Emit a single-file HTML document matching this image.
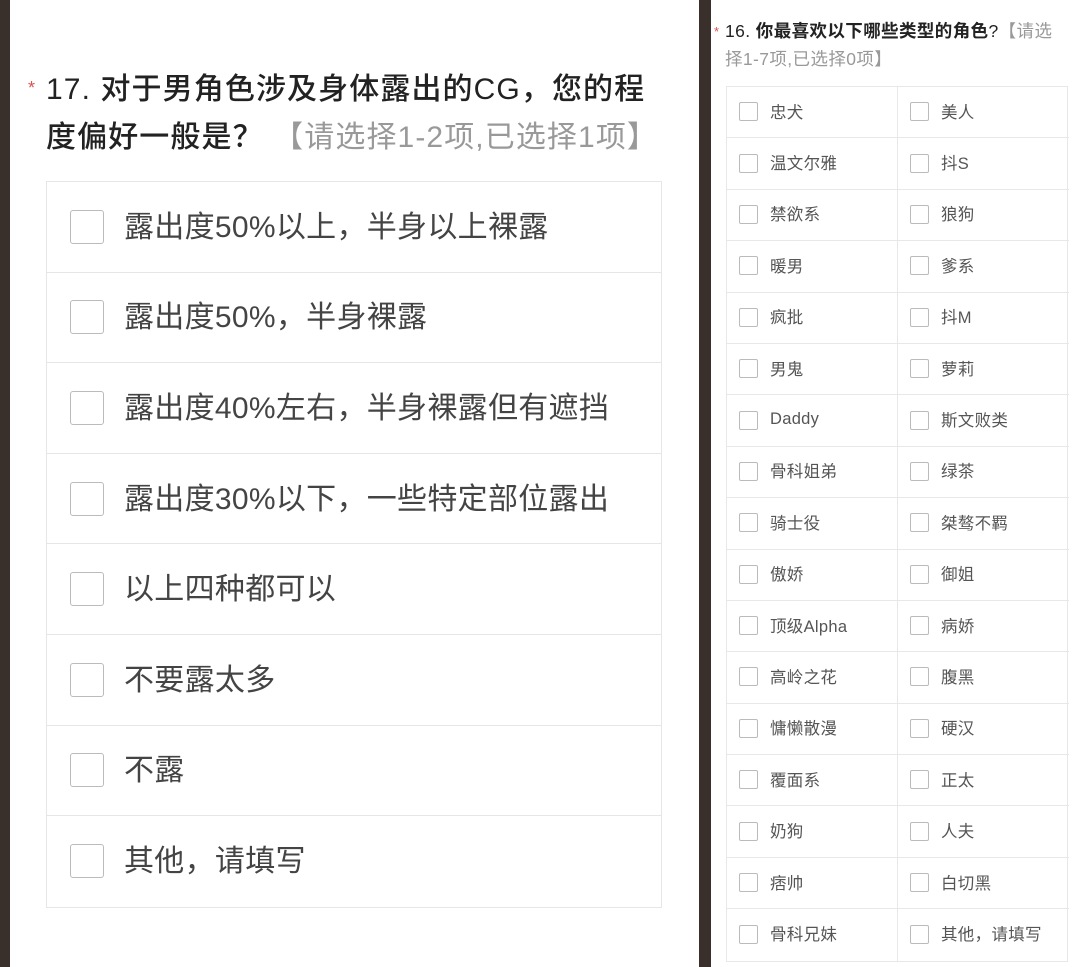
<!DOCTYPE html>
<html><head><meta charset="utf-8"><style>
*{margin:0;padding:0;box-sizing:border-box}
body{width:1080px;height:967px;background:#3a302b;position:relative;overflow:hidden;font-family:"Liberation Sans","Noto Sans CJK SC",sans-serif}
.lp{position:absolute;left:10px;top:0;width:689px;height:967px;background:#fff}
.rp{position:absolute;left:711px;top:0;width:369px;height:967px;background:#fff}
.lt{position:absolute;left:46px;top:66px;width:660px;white-space:nowrap;font-size:30px;line-height:48px;color:#222;font-weight:500;letter-spacing:1.1px}
.star{position:absolute;color:#d9534f}
.gray{color:#999;font-weight:400}
.lbox{position:absolute;left:46px;top:181px;width:616px;border:1px solid #e6e6e6}
.lrow{height:90.6px;border-bottom:1px solid #e6e6e6;display:flex;align-items:center;font-size:30px;color:#444;letter-spacing:0.3px}
.lrow span{position:relative;top:-3px}
.lrow:last-child{border-bottom:none}
.cb{width:34px;height:34px;border:1.5px solid #bbb;border-radius:3px;margin-left:23px;margin-right:20px;flex:none}
.rt{position:absolute;left:725px;top:17px;width:360px;white-space:nowrap;font-size:17.5px;line-height:28px;color:#222;letter-spacing:0.4px}
.grid{position:absolute;left:726px;top:86px;width:342px;border:1px solid #e8e8e8;display:grid;grid-template-columns:171px 171px}
.c{height:51.4px;border-bottom:1px solid #e8e8e8;display:flex;align-items:center;font-size:16.5px;color:#555;letter-spacing:0.3px;padding-bottom:3px}
.c:nth-child(odd){border-right:1px solid #e8e8e8}
.c:nth-last-child(-n+2){border-bottom:none}
.sc{width:19px;height:19px;border:1px solid #bbb;border-radius:2px;margin-left:12px;margin-right:12px;flex:none;position:relative;top:1px}
</style></head><body>
<div class="lp"></div>
<div class="rp"></div>
<span class="star" style="left:28px;top:78px;font-size:18px">*</span>
<div class="lt">17. 对于男角色涉及身体露出的CG，您的程<br>度偏好一般是？ <span class="gray">【请选择1-2项,已选择1项】</span></div>
<div class="lbox">
<div class="lrow"><div class="cb"></div><span>露出度50%以上，半身以上裸露</span></div>
<div class="lrow"><div class="cb"></div><span>露出度50%，半身裸露</span></div>
<div class="lrow"><div class="cb"></div><span>露出度40%左右，半身裸露但有遮挡</span></div>
<div class="lrow"><div class="cb"></div><span>露出度30%以下，一些特定部位露出</span></div>
<div class="lrow"><div class="cb"></div><span>以上四种都可以</span></div>
<div class="lrow"><div class="cb"></div><span>不要露太多</span></div>
<div class="lrow"><div class="cb"></div><span>不露</span></div>
<div class="lrow"><div class="cb"></div><span>其他，请填写</span></div>
</div>
<span class="star" style="left:714px;top:24px;font-size:13px">*</span>
<div class="rt">16. <b>你最喜欢以下哪些类型的角色</b>?<span class="gray">【请选<br>择1-7项,已选择0项】</span></div>
<div class="grid">
<div class="c"><div class="sc"></div>忠犬</div><div class="c"><div class="sc"></div>美人</div>
<div class="c"><div class="sc"></div>温文尔雅</div><div class="c"><div class="sc"></div>抖S</div>
<div class="c"><div class="sc"></div>禁欲系</div><div class="c"><div class="sc"></div>狼狗</div>
<div class="c"><div class="sc"></div>暖男</div><div class="c"><div class="sc"></div>爹系</div>
<div class="c"><div class="sc"></div>疯批</div><div class="c"><div class="sc"></div>抖M</div>
<div class="c"><div class="sc"></div>男鬼</div><div class="c"><div class="sc"></div>萝莉</div>
<div class="c"><div class="sc"></div>Daddy</div><div class="c"><div class="sc"></div>斯文败类</div>
<div class="c"><div class="sc"></div>骨科姐弟</div><div class="c"><div class="sc"></div>绿茶</div>
<div class="c"><div class="sc"></div>骑士役</div><div class="c"><div class="sc"></div>桀骜不羁</div>
<div class="c"><div class="sc"></div>傲娇</div><div class="c"><div class="sc"></div>御姐</div>
<div class="c"><div class="sc"></div>顶级Alpha</div><div class="c"><div class="sc"></div>病娇</div>
<div class="c"><div class="sc"></div>高岭之花</div><div class="c"><div class="sc"></div>腹黑</div>
<div class="c"><div class="sc"></div>慵懒散漫</div><div class="c"><div class="sc"></div>硬汉</div>
<div class="c"><div class="sc"></div>覆面系</div><div class="c"><div class="sc"></div>正太</div>
<div class="c"><div class="sc"></div>奶狗</div><div class="c"><div class="sc"></div>人夫</div>
<div class="c"><div class="sc"></div>痞帅</div><div class="c"><div class="sc"></div>白切黑</div>
<div class="c"><div class="sc"></div>骨科兄妹</div><div class="c"><div class="sc"></div>其他，请填写</div>
</div>
</body></html>
